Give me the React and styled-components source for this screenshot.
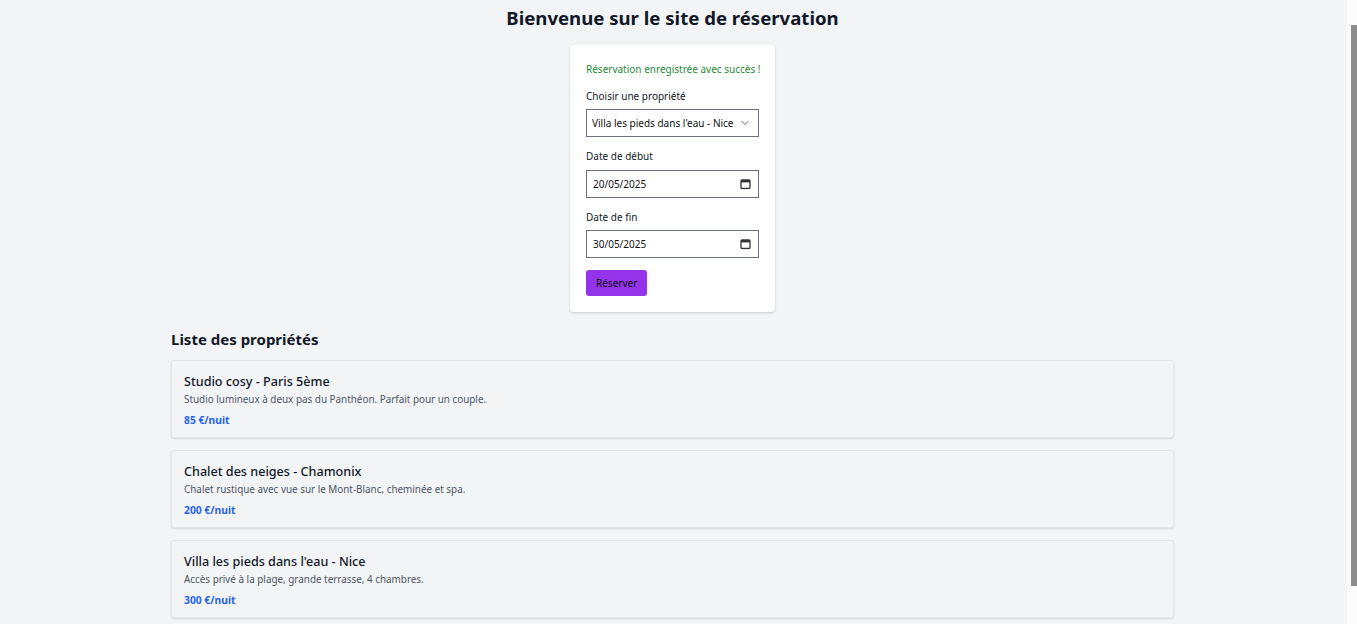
import styled, { createGlobalStyle } from "styled-components";

const GlobalStyle = createGlobalStyle`
  html, body {
    margin: 0;
    padding: 0;
    background: #f3f4f6;
    font-family: "Noto Sans", "Open Sans", sans-serif;
    color: #111827;
    overflow: hidden;
  }
  * { box-sizing: border-box; }
`;

const Shell = styled.div`
  display: flex;
  height: 624px;
`;

const Page = styled.main`
  flex: 1;
  min-width: 0;
  overflow: hidden;
  padding: 4px 0 38px;
`;

const Scrollbar = styled.div`
  width: 12px;
  flex-shrink: 0;
  background: #fbfbfb;
  border-left: 2px solid #f3f4f6;
  display: flex;
  flex-direction: column;
  align-items: stretch;
  padding: 25px 0 38px 4px;
`;

const ScrollThumb = styled.div`
  flex: 1;
  background: #8d8d8d;
`;

const Title = styled.h1`
  margin: 0 0 13px;
  font-size: 18.6px;
  line-height: 28px;
  font-weight: 700;
  text-align: center;
`;

const FormCard = styled.form`
  width: 205px;
  margin: 0 auto;
  background: #fff;
  border-radius: 4px;
  box-shadow: 0 1px 3px rgba(0, 0, 0, 0.12), 0 1px 2px rgba(0, 0, 0, 0.06);
  padding: 16px;
`;

const Success = styled.p`
  margin: 0 0 11px;
  font-size: 10px;
  line-height: 16px;
  white-space: nowrap;
  color: #1f8a3a;
`;

const Field = styled.div`
  margin-bottom: 11px;
`;

const Label = styled.label`
  display: block;
  font-size: 10px;
  line-height: 16px;
  margin-bottom: ${(props) => (props.$gap ? props.$gap : 5)}px;
`;

const InputWrap = styled.div`
  position: relative;
  width: 173px;
  height: 28px;
`;

const Select = styled.select`
  appearance: none;
  width: 100%;
  height: 100%;
  border: 1px solid #6b7280;
  border-radius: 0;
  background: #fff;
  font-family: inherit;
  font-size: 10px;
  color: #111;
  padding: 0 18px 0 5px;
  outline: none;
`;

const TextInput = styled.input`
  width: 100%;
  height: 100%;
  border: 1px solid #6b7280;
  border-radius: 0;
  background: #fff;
  font-family: inherit;
  font-size: 10px;
  color: #111;
  padding: 0 24px 0 6px;
  outline: none;
`;

const FieldIcon = styled.svg`
  position: absolute;
  right: ${(props) => props.$right || 8}px;
  top: 50%;
  transform: translateY(-50%);
  pointer-events: none;
`;

const Button = styled.button`
  margin-top: 1px;
  height: 26px;
  padding: 0 10px;
  border: none;
  border-radius: 3px;
  background: #9333ea;
  color: #111;
  font-family: inherit;
  font-size: 10px;
  cursor: pointer;
`;

const ListSection = styled.section`
  max-width: 1003px;
  margin: 17px auto 0;
`;

const ListTitle = styled.h2`
  margin: 0 0 11px;
  font-size: 15px;
  line-height: 20px;
  font-weight: 700;
`;

const Cards = styled.div`
  display: flex;
  flex-direction: column;
  gap: 12px;
`;

const Card = styled.article`
  height: 78px;
  padding: 13px 12px 11px;
  border: 1px solid #e5e7eb;
  border-radius: 3px;
  background: #f3f4f6;
  box-shadow: 0 1px 2px rgba(0, 0, 0, 0.12);
`;

const CardTitle = styled.h3`
  margin: 0;
  font-size: 12.6px;
  line-height: 16px;
  font-weight: 500;
`;

const CardDesc = styled.p`
  margin: 1px 0 0;
  font-size: 9.9px;
  line-height: 16px;
  color: #4b5563;
`;

const Price = styled.p`
  margin: 5px 0 0;
  font-size: 10.3px;
  line-height: 16px;
  font-weight: 700;
  color: #2563eb;
`;

const Chevron = () => (
  <FieldIcon $right={10} width="8" height="5" viewBox="0 0 8 5">
    <path d="M0.6 0.6 L4 4 L7.4 0.6" fill="none" stroke="#666" strokeWidth="1" />
  </FieldIcon>
);

const Calendar = () => (
  <FieldIcon width="11" height="11" viewBox="0 0 11 11">
    <rect x="1" y="1.5" width="9" height="8.5" rx="1" fill="none" stroke="#333" strokeWidth="1.3" />
    <rect x="1" y="1.5" width="9" height="2.4" fill="#333" />
  </FieldIcon>
);

const properties = [
  {
    id: 1,
    name: "Studio cosy - Paris 5ème",
    description: "Studio lumineux à deux pas du Panthéon. Parfait pour un couple.",
    price: 85,
  },
  {
    id: 2,
    name: "Chalet des neiges - Chamonix",
    description: "Chalet rustique avec vue sur le Mont-Blanc, cheminée et spa.",
    price: 200,
  },
  {
    id: 3,
    name: "Villa les pieds dans l'eau - Nice",
    description: "Accès privé à la plage, grande terrasse, 4 chambres.",
    price: 300,
  },
];

export default function App() {
  return (
    <Shell>
      <GlobalStyle />
      <Page>
        <Title>Bienvenue sur le site de réservation</Title>
        <FormCard onSubmit={(e) => e.preventDefault()}>
          <Success>Réservation enregistrée avec succès !</Success>
          <Field>
            <Label>Choisir une propriété</Label>
            <InputWrap>
              <Select defaultValue="3">
                {properties.map((p) => (
                  <option key={p.id} value={p.id}>
                    {p.name}
                  </option>
                ))}
              </Select>
              <Chevron />
            </InputWrap>
          </Field>
          <Field>
            <Label $gap={6}>Date de début</Label>
            <InputWrap>
              <TextInput type="text" defaultValue="20/05/2025" />
              <Calendar />
            </InputWrap>
          </Field>
          <Field>
            <Label $gap={5}>Date de fin</Label>
            <InputWrap>
              <TextInput type="text" defaultValue="30/05/2025" />
              <Calendar />
            </InputWrap>
          </Field>
          <Button type="submit">Réserver</Button>
        </FormCard>
        <ListSection>
          <ListTitle>Liste des propriétés</ListTitle>
          <Cards>
            {properties.map((p) => (
              <Card key={p.id}>
                <CardTitle>{p.name}</CardTitle>
                <CardDesc>{p.description}</CardDesc>
                <Price>{p.price} €/nuit</Price>
              </Card>
            ))}
          </Cards>
        </ListSection>
      </Page>
      <Scrollbar>
        <ScrollThumb />
      </Scrollbar>
    </Shell>
  );
}
